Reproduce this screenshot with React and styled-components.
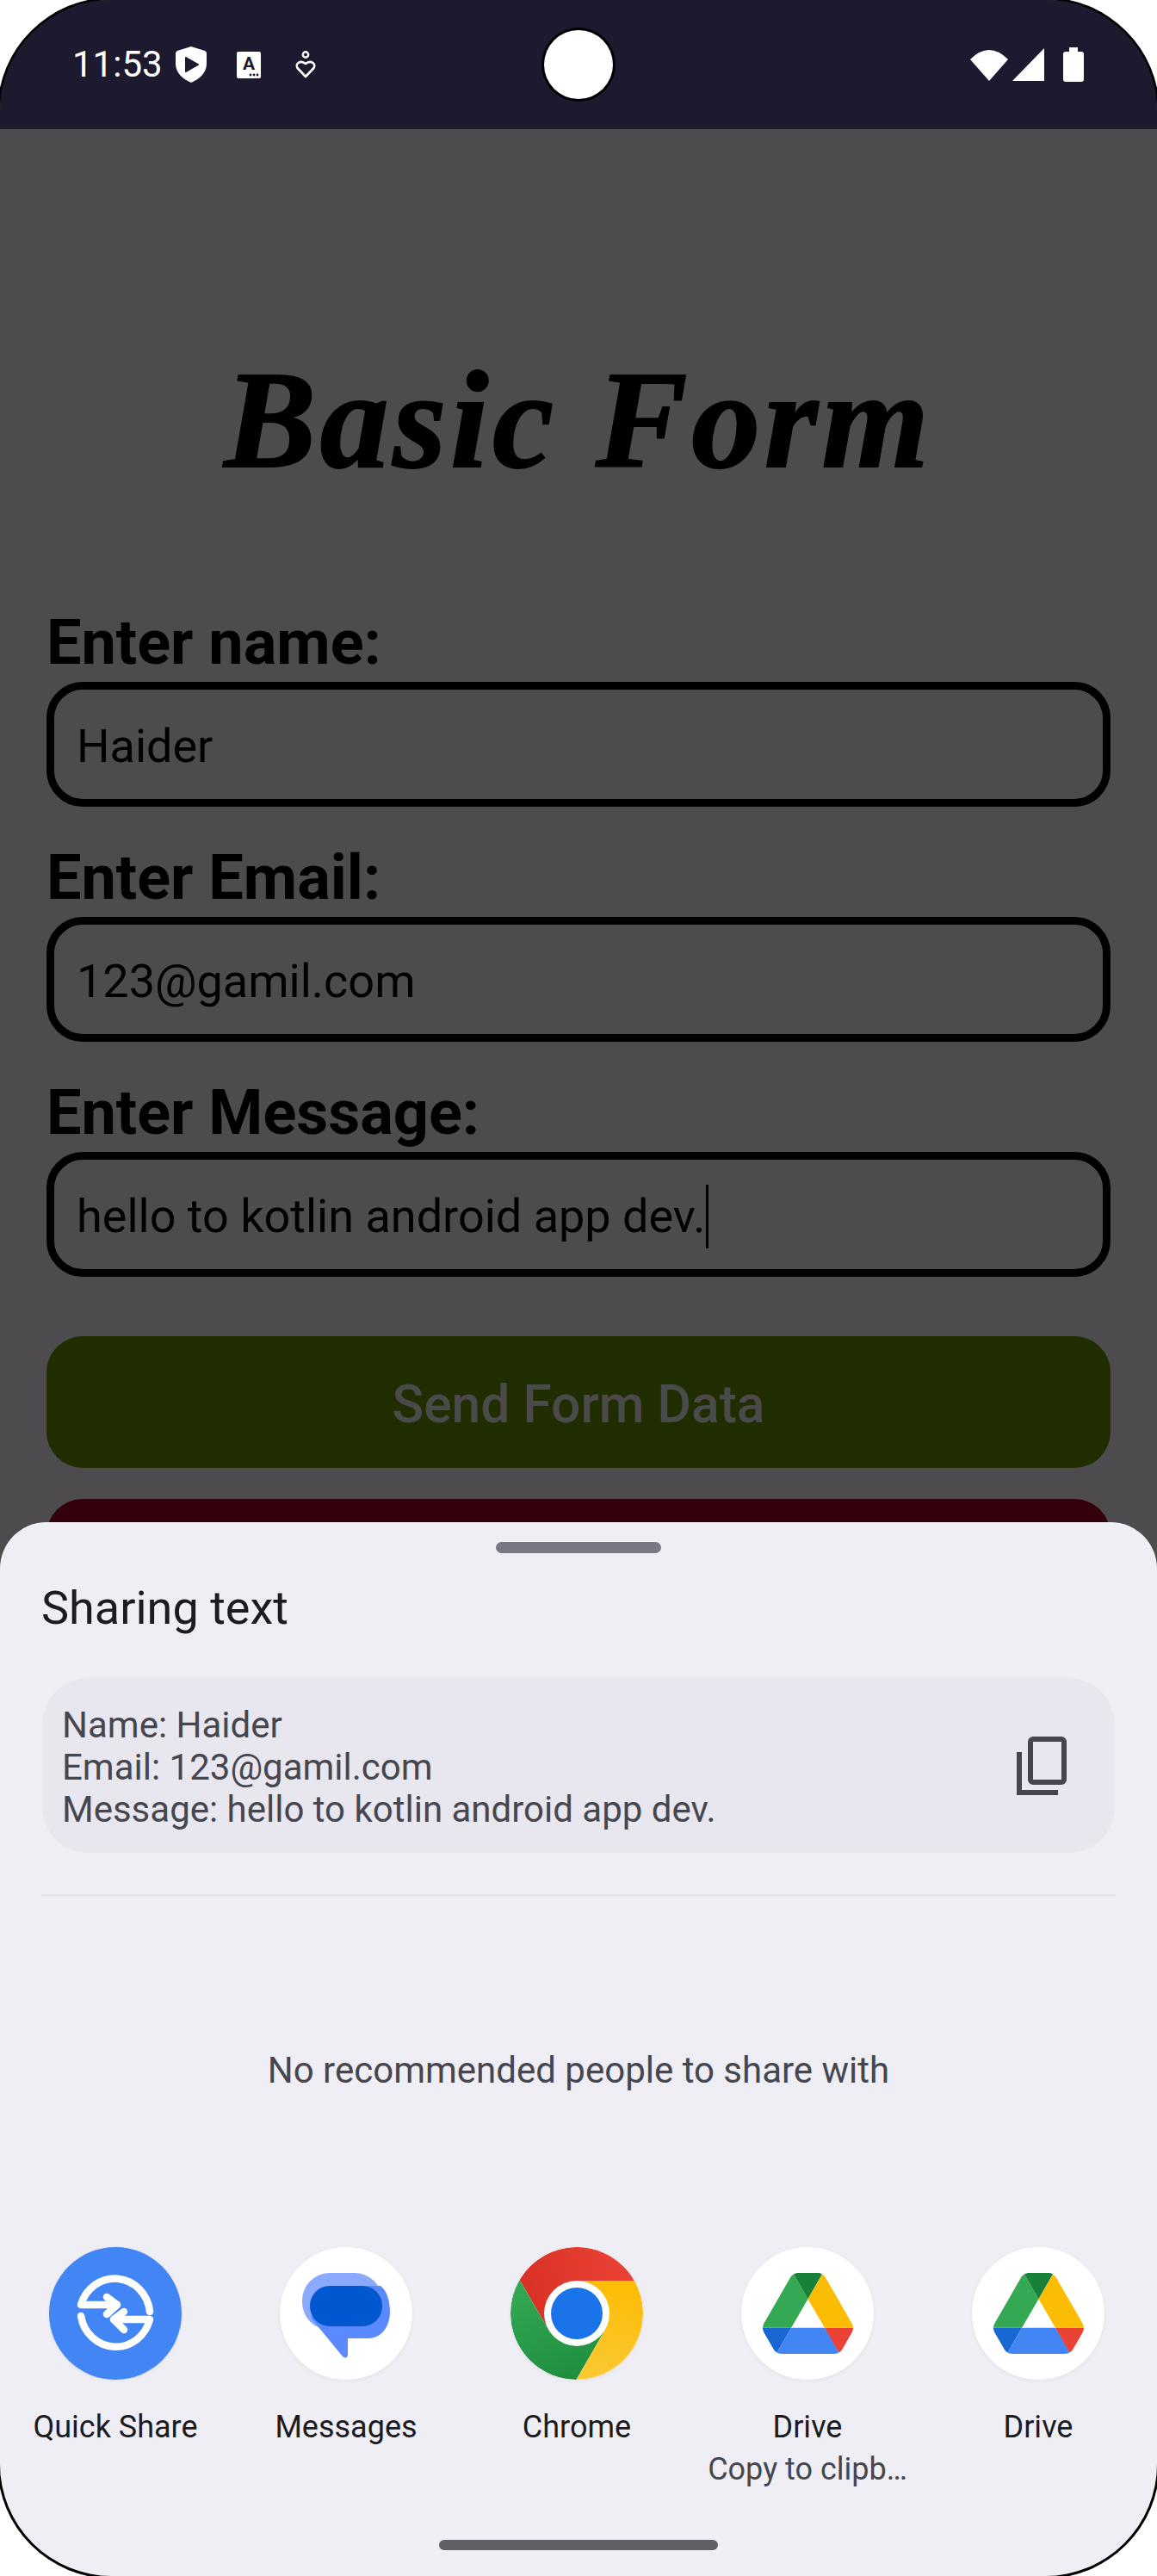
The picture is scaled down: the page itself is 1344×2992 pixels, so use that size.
import React from 'react';
import styled, { createGlobalStyle } from 'styled-components';

const GlobalStyle = createGlobalStyle`
  html, body {
    margin: 0;
    padding: 0;
    background: #fff;
  }
  * {
    box-sizing: border-box;
  }
`;

const Page = styled.div`
  width: 1344px;
  height: 2992px;
  background: #fff;
  overflow: hidden;
  font-family: 'Roboto', sans-serif;
`;

const Screen = styled.div`
  position: relative;
  width: 1344px;
  height: 2992px;
  border-radius: 130px;
  overflow: hidden;
  background: #4d4b4e;
  box-shadow: 0 0 0 3px #000;
`;

const StatusBar = styled.header`
  position: relative;
  height: 150px;
  background: #1d1a2f;
  display: flex;
  align-items: center;
  justify-content: space-between;
  padding: 0 85px 0 84px;
`;

const StatusGroup = styled.div`
  display: flex;
  align-items: center;
  height: 42px;
  margin-top: 0;
`;

const Clock = styled.span`
  color: #fff;
  font-size: 42px;
  line-height: 42px;
  width: 120px;
`;

const Camera = styled.div`
  position: absolute;
  left: 632px;
  top: 35px;
  width: 80px;
  height: 80px;
  border-radius: 50%;
  background: #fff;
  box-shadow: 0 0 0 3px #000;
`;

const Form = styled.main`
  padding: 0 54px;
`;

const Title = styled.h1`
  margin: 0;
  padding-top: 253px;
  height: 555px;
  text-align: center;
  font-family: 'Liberation Serif', serif;
  font-style: italic;
  font-weight: 700;
  font-size: 160px;
  letter-spacing: 4.5px;
  -webkit-text-stroke: 2px #000;
  line-height: 170px;
  color: #000;
`;

const Field = styled.section`
  height: 273px;
`;

const Label = styled.div`
  height: 87px;
  font-size: 72px;
  font-weight: 700;
  line-height: 83px;
  color: #000;
`;

const InputBox = styled.div`
  height: 145px;
  border: 9px solid #000;
  border-radius: 42px;
  padding: 4px 26px 0;
  display: flex;
  align-items: center;
  font-size: 54px;
  color: #000;
`;

const Caret = styled.span`
  display: inline-block;
  width: 3px;
  height: 74px;
  margin-left: 1px;
  background: #000;
`;

const Actions = styled.div`
  padding-top: 28px;
`;

const Action = styled.button`
  display: block;
  width: 100%;
  height: 153px;
  border: 0;
  border-radius: 42px;
  margin-bottom: 36px;
  padding: 5px 0 0;
  background: ${(p) => p.$bg};
  color: #4a4a4a;
  font-family: 'Roboto', sans-serif;
  font-size: 60.5px;
  font-weight: 500;
`;

const Sheet = styled.section`
  position: absolute;
  left: 0;
  right: 0;
  bottom: 0;
  height: 1224px;
  background: #eeeef4;
  border-radius: 54px 54px 0 0;
  display: flex;
  flex-direction: column;
`;

const Handle = styled.div`
  width: 192px;
  height: 13px;
  margin: 23px auto 0;
  border-radius: 7px;
  background: #787882;
`;

const SheetTitle = styled.h2`
  margin: 38px 0 0 48px;
  height: 52px;
  font-size: 54px;
  font-weight: 400;
  line-height: 52px;
  color: #1b1b21;
`;

const Preview = styled.div`
  margin: 55px 49px 0;
  height: 203px;
  padding: 0 23px;
  border-radius: 54px;
  background: #e8e7f0;
  display: flex;
  align-items: center;
  justify-content: space-between;
`;

const PreviewText = styled.div`
  padding-top: 4px;
  font-size: 42px;
  line-height: 49px;
  color: #46464f;
`;

const CopyButton = styled.div`
  display: flex;
  margin-right: 33px;
`;

const Divider = styled.hr`
  margin: 48px 48px 0;
  height: 2px;
  border: 0;
  background: #e4e3eb;
`;

const EmptyNote = styled.p`
  margin: 0 0 2px;
  height: 406px;
  padding-bottom: 2px;
  display: flex;
  align-items: center;
  justify-content: center;
  font-size: 42px;
  color: #46464f;
`;

const Targets = styled.div`
  display: grid;
  grid-template-columns: repeat(5, 268px);
`;

const Target = styled.div`
  display: flex;
  flex-direction: column;
  align-items: center;
`;

const AppIcon = styled.div`
  width: 154px;
  height: 154px;
  border-radius: 50%;
  overflow: hidden;
  display: flex;
  align-items: center;
  justify-content: center;
  background: ${(p) => p.$bg || '#fff'};
  box-shadow: 0 1px 4px rgba(0, 0, 0, 0.06);
`;

const AppName = styled.div`
  margin-top: 30px;
  font-size: 36px;
  line-height: 50px;
  color: #1b1b21;
`;

const AppSub = styled.div`
  font-size: 36px;
  line-height: 49px;
  color: #46464f;
`;

const HomePill = styled.div`
  margin: auto auto 30px;
  width: 324px;
  height: 12px;
  border-radius: 6px;
  background: #616163;
`;

const ShieldIcon = () => (
  <svg width="36" height="42" viewBox="0 0 36 42">
    <path d="M18 0 L34 5 Q36 6 36 8 V20 C36 31 27 38 18 42 C9 38 0 31 0 20 V8 Q0 6 2 5 Z" fill="#fff" />
    <path d="M12 13 L26 21 L12 29 Z" fill="#1d1a2f" stroke="#1d1a2f" strokeWidth="2" strokeLinejoin="round" />
  </svg>
);

const CardIcon = () => (
  <svg width="28" height="31" viewBox="0 0 28 31" style={{ marginLeft: 35 }}>
    <rect width="28" height="31" rx="2" fill="#fff" />
    <text x="14" y="21" textAnchor="middle" fontFamily="Roboto" fontWeight="700" fontSize="21" fill="#1d1a2f">A</text>
    <circle cx="16" cy="27" r="1.4" fill="#1d1a2f" />
    <circle cx="20" cy="27" r="1.4" fill="#1d1a2f" />
    <circle cx="24" cy="27" r="1.4" fill="#1d1a2f" />
  </svg>
);

const HeartPersonIcon = () => (
  <svg width="24" height="32" viewBox="0 0 24 32" style={{ marginLeft: 40 }}>
    <circle cx="12" cy="4.5" r="3.2" fill="none" stroke="#fff" strokeWidth="2.4" />
    <path d="M12 30 L2.5 20 C-0.5 15 6 10 12 15 C18 10 24.5 15 21.5 20 Z" fill="none" stroke="#fff" strokeWidth="2.6" strokeLinejoin="round" />
  </svg>
);

const WifiIcon = () => (
  <svg width="44" height="38" viewBox="0 0 44 38">
    <path d="M22 38 L0 13 Q22 -9 44 13 Z" fill="#fff" />
  </svg>
);

const SignalIcon = () => (
  <svg width="37" height="38" viewBox="0 0 37 38" style={{ marginLeft: 5 }}>
    <path d="M37 0 V38 H0 Z" fill="#fff" />
  </svg>
);

const BatteryIcon = () => (
  <svg width="24" height="40" viewBox="0 0 24 40" style={{ marginLeft: 22 }}>
    <path d="M7 0 H17 V5 H21 Q24 5 24 8 V37 Q24 40 21 40 H3 Q0 40 0 37 V8 Q0 5 3 5 H7 Z" fill="#fff" />
  </svg>
);

const CopyIcon = () => (
  <svg width="58" height="68" viewBox="0 0 58 68" fill="none" stroke="#46464f" strokeWidth="6">
    <rect x="16" y="3" width="39" height="50" rx="3" />
    <path d="M3 18 V65 H48" />
  </svg>
);

const QuickShareLogo = () => (
  <svg width="154" height="154" viewBox="-77 -77 154 154" fill="none" stroke="#fff" strokeWidth="8.5" strokeLinecap="round" strokeLinejoin="round">
    <path d="M40 -2 A41 43 0 0 0 -40 -10 H2" />
    <path d="M-10 -19 L2 -10 L-10 1" />
    <path d="M-40 3 A41 43 0 0 0 40 7 H-2" />
    <path d="M10 -2 L-2 7 L10 19" />
  </svg>
);

const MessagesLogo = () => (
  <svg width="154" height="154" viewBox="0 0 154 154">
    <rect x="26" y="30" width="93" height="66" rx="32" fill="#8aa9ff" />
    <path d="M36 82 L73 127 Q78 131 79 125 V106 H103 C118 106 128 92 128 75 C128 62 124 50 117 45 H60 Z" fill="#5b8aff" />
    <rect x="35" y="45" width="84" height="47" rx="23" fill="#0057cf" />
  </svg>
);

const ChromeLogo = () => (
  <svg width="154" height="154" viewBox="-77 -77 154 154">
    <defs>
      <linearGradient id="chromeRed" x1="0" y1="0.6" x2="1" y2="0.4">
        <stop offset="0" stopColor="#d93025" />
        <stop offset="1" stopColor="#ea4335" />
      </linearGradient>
      <linearGradient id="chromeGreen" x1="0.3" y1="0" x2="0.7" y2="1">
        <stop offset="0" stopColor="#34a853" />
        <stop offset="1" stopColor="#1e8e3e" />
      </linearGradient>
      <linearGradient id="chromeYellow" x1="0.5" y1="0" x2="0.4" y2="1">
        <stop offset="0" stopColor="#fbbc04" />
        <stop offset="1" stopColor="#fcc934" />
      </linearGradient>
    </defs>
    <path d="M0 -38 H67 A77 77 0 0 0 -66.4 -39 L-32.9 19 Z" fill="url(#chromeRed)" />
    <path d="M-66.4 -39 A77 77 0 0 0 -0.6 77 L32.9 19 L-32.9 19 Z" fill="url(#chromeGreen)" />
    <path d="M-0.6 77 A77 77 0 0 0 67 -38 H0 L32.9 19 Z" fill="url(#chromeYellow)" />
    <circle r="38" fill="#fff" />
    <circle r="30" fill="#1a73e8" />
  </svg>
);

const DriveLogo = () => (
  <svg width="105" height="94" viewBox="0 0 87.3 78">
    <path d="m6.6 66.85 3.85 6.65c.8 1.4 1.95 2.5 3.3 3.3l13.75-23.8h-27.5c0 1.55.4 3.1 1.2 4.5z" fill="#1967d2" />
    <path d="m43.65 25-13.75-23.8c-1.35.8-2.5 1.9-3.3 3.3l-25.4 44a9.06 9.06 0 0 0 -1.2 4.5h27.5z" fill="#34a853" />
    <path d="m73.55 76.8c1.35-.8 2.5-1.9 3.3-3.3l1.6-2.75 7.65-13.25c.8-1.4 1.2-2.95 1.2-4.5h-27.502l5.852 11.5z" fill="#ea4335" />
    <path d="m43.65 25 13.75-23.8c-1.35-.8-2.9-1.2-4.5-1.2h-18.5c-1.6 0-3.15.45-4.5 1.2z" fill="#188038" />
    <path d="m59.8 53h-32.3l-13.75 23.8c1.35.8 2.9 1.2 4.5 1.2h50.8c1.6 0 3.15-.45 4.5-1.2z" fill="#4285f4" />
    <path d="m73.4 26.5-12.7-22c-.8-1.4-1.95-2.5-3.3-3.3l-13.75 23.8 16.15 28h27.45c0-1.55-.4-3.1-1.2-4.5z" fill="#fbbc04" />
  </svg>
);

const fields = [
  { label: 'Enter name:', value: 'Haider' },
  { label: 'Enter Email:', value: '123@gamil.com' },
  { label: 'Enter Message:', value: 'hello to kotlin android app dev.', focused: true },
];

const targets = [
  { name: 'Quick Share', bg: '#4285f4', logo: <QuickShareLogo /> },
  { name: 'Messages', logo: <MessagesLogo /> },
  { name: 'Chrome', logo: <ChromeLogo /> },
  { name: 'Drive', sub: 'Copy to clipb…', logo: <DriveLogo /> },
  { name: 'Drive', logo: <DriveLogo /> },
];

const App = () => (
  <>
    <GlobalStyle />
    <Page>
      <Screen>
        <StatusBar>
          <StatusGroup>
            <Clock>11:53</Clock>
            <ShieldIcon />
            <CardIcon />
            <HeartPersonIcon />
          </StatusGroup>
          <StatusGroup>
            <WifiIcon />
            <SignalIcon />
            <BatteryIcon />
          </StatusGroup>
          <Camera />
        </StatusBar>

        <Form>
          <Title>Basic Form</Title>
          {fields.map((f) => (
            <Field key={f.label}>
              <Label>{f.label}</Label>
              <InputBox>
                {f.value}
                {f.focused && <Caret />}
              </InputBox>
            </Field>
          ))}
          <Actions>
            <Action $bg="#1f2d00">Send Form Data</Action>
            <Action $bg="#33000b" />
          </Actions>
        </Form>

        <Sheet>
          <Handle />
          <SheetTitle>Sharing text</SheetTitle>
          <Preview>
            <PreviewText>
              Name: Haider
              <br />
              Email: 123@gamil.com
              <br />
              Message: hello to kotlin android app dev.
            </PreviewText>
            <CopyButton>
              <CopyIcon />
            </CopyButton>
          </Preview>
          <Divider />
          <EmptyNote>No recommended people to share with</EmptyNote>
          <Targets>
            {targets.map((t, i) => (
              <Target key={i}>
                <AppIcon $bg={t.bg}>{t.logo}</AppIcon>
                <AppName>{t.name}</AppName>
                {t.sub && <AppSub>{t.sub}</AppSub>}
              </Target>
            ))}
          </Targets>
          <HomePill />
        </Sheet>
      </Screen>
    </Page>
  </>
);

export default App;
